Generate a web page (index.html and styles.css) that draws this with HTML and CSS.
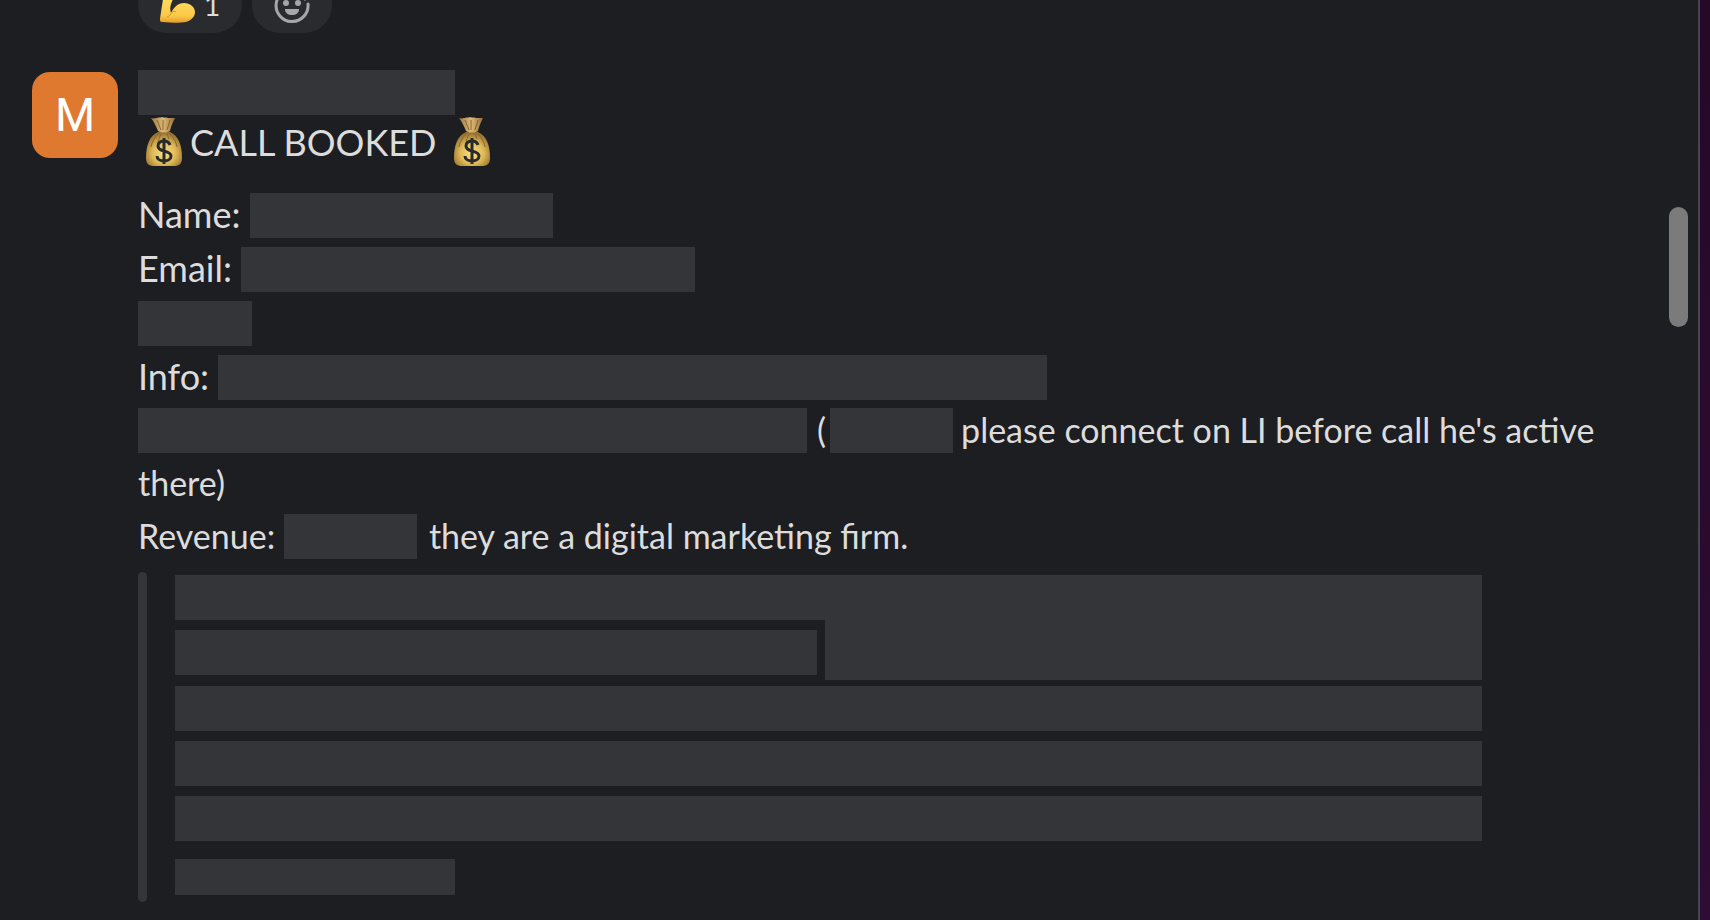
FILE: index.html
```
<!DOCTYPE html>
<html lang="en">
<head>
  <meta charset="UTF-8">
  <meta name="viewport" content="width=device-width, initial-scale=1.0">
  <title>Call Booked</title>
  <link rel="stylesheet" href="styles.css">
</head>
<body>
  <svg class="defs" width="0" height="0" aria-hidden="true">
    <defs>
      <radialGradient id="bag" cx="50%" cy="62%" r="60%">
        <stop offset="0" stop-color="#f9e088"/>
        <stop offset="0.55" stop-color="#dfb955"/>
        <stop offset="1" stop-color="#94702f"/>
      </radialGradient>
      <linearGradient id="neck" x1="0" x2="1">
        <stop offset="0" stop-color="#a07a44"/>
        <stop offset="0.5" stop-color="#dcb878"/>
        <stop offset="1" stop-color="#94703c"/>
      </linearGradient>
      <linearGradient id="arm" x1="0" y1="0" x2="0" y2="1">
        <stop offset="0.3" stop-color="#ffdc5e"/>
        <stop offset="0.8" stop-color="#fbc845"/>
        <stop offset="1" stop-color="#e39c2c"/>
      </linearGradient>
      <symbol id="money-bag" viewBox="0 0 36 50">
        <path d="M12 15C3 19 0 29 0 41c0 6 3 8 8 8h20c5 0 8-2 8-8 0-12-3-22-12-26z" fill="url(#bag)"/>
        <path d="M5 1c2 1 4 0 6 0 2-1 3 0 5-1 2 1 4 0 6 1 2 0 4 0 7 0-2 4-4 8-5 13-3 2-9 2-12 0C10 9 8 5 5 1z" fill="url(#neck)"/>
        <path d="M11 3l4 10M17 3v10M24 3l-3 10M12 17c-4 4-6 8-7 13M24 17c4 4 6 8 7 13M15 17l-3 7M21 17l2 5" fill="none" stroke="#8a6630" stroke-width="1"/>
        <path d="M24 28c-1-3-3-4-6-4-4 0-6 2-6 5s2 4 6 5c4 1 7 2 7 5s-3 5-7 5-7-2-7-5M18 21v26" fill="none" stroke="#292a2b" stroke-width="3"/>
      </symbol>
    </defs>
  </svg>

  <div class="app">
    <main class="pane">
      <div class="reactions">
        <button class="reaction" aria-label="Flexed biceps, 1 reaction">
          <svg class="arm" viewBox="0 0 36 36" aria-hidden="true">
            <path d="M4 4C3 14 1 24 0 32c0 3 1 3 3 3 8 1 17 1 23 0 6-2 9-6 9-10 0-5-5-9-11-9-6 0-10 4-13 10-1-3-1-6 0-9l2-5V2z" fill="url(#arm)"/>
            <path d="M7 30c3-1 4-3 5-5 1-1 3-1 4 0" fill="none" stroke="#d8962a" stroke-width="1"/>
          </svg>
          <span class="count">1</span>
        </button>
        <button class="reaction" aria-label="Add reaction">
          <svg class="smile" viewBox="0 0 36 36" aria-hidden="true">
            <path d="M22 3A16 16 0 1 0 34 17" fill="none" stroke="#a7a7a9" stroke-width="3" stroke-linecap="round"/>
            <path d="M31 4v9M27 8h9" fill="none" stroke="#77777a" stroke-width="2" stroke-linecap="round"/>
            <ellipse cx="12" cy="16" rx="3" ry="3" fill="#a7a7a9"/>
            <ellipse cx="24" cy="16" rx="3" ry="3" fill="#a7a7a9"/>
            <path d="M11 22h14c0 4-3 6-7 6s-7-2-7-6z" fill="#a7a7a9"/>
          </svg>
        </button>
      </div>

      <article class="message">
        <div class="avatar">M</div>
        <div class="body">
          <div class="redacted sender"></div>
          <h1 class="title">
            <svg class="bag" aria-hidden="true"><use href="#money-bag"/></svg>
            <span>CALL BOOKED</span>
            <svg class="bag" aria-hidden="true"><use href="#money-bag"/></svg>
          </h1>

          <div class="contact">
            <div class="line">Name: <span class="redacted name"></span></div>
            <div class="line">Email: <span class="redacted email"></span></div>
            <div class="line"><span class="redacted phone"></span></div>
            <div class="line">Info: <span class="redacted info"></span></div>
          </div>
          <div class="details">
            <div class="line"><span class="redacted info-more"></span><span class="paren">(</span><span class="redacted person"></span>please connect on LI before call he's active</div>
            <div class="line">there)</div>
            <div class="line">Revenue: <span class="redacted revenue"></span>they are a digital marketing firm.</div>
          </div>

          <blockquote class="quote">
            <div class="quote-top">
              <div class="redacted quote-first"></div>
              <div class="redacted quote-second"></div>
              <div class="redacted quote-side"></div>
            </div>
            <div class="redacted"></div>
            <div class="redacted"></div>
            <div class="redacted"></div>
            <div class="redacted quote-last"></div>
          </blockquote>
        </div>
      </article>
      <div class="scrollbar"></div>
    </main>
    <div class="edge"></div>
  </div>
</body>
</html>
```
FILE: styles.css
```
* {
  box-sizing: border-box;
}

body {
  margin: 0;
  background-color: #1d1e22;
  color: #dcdcdc;
  font-family: Lato, sans-serif;
  font-size: 36px;
}

.defs {
  position: absolute;
}

.app {
  display: flex;
  min-height: 100vh;
}

.pane {
  position: relative;
  flex: 1;
  min-width: 0;
  overflow: hidden;
  border-right: 2px solid #48434e;
}

.edge {
  width: 10px;
  background: linear-gradient(#270829, #2e0c33);
}

/* reactions of the message above, scrolled partly out of view */
.reactions {
  display: flex;
  gap: 10px;
  height: 33px;
  margin-left: 138px;
  align-items: flex-end;
}

.reaction {
  display: flex;
  align-items: center;
  justify-content: center;
  gap: 8px;
  flex: none;
  height: 56px;
  padding: 0 22px;
  border: 0;
  border-radius: 28px;
  background-color: #2a2b2f;
  color: #dcdcdc;
  font: 28px Lato, sans-serif;
}

.arm,
.smile {
  width: 36px;
  height: 36px;
}

.message {
  display: flex;
  gap: 20px;
  padding: 37px 32px 16px;
}

.avatar {
  display: flex;
  align-items: center;
  justify-content: center;
  flex: none;
  width: 86px;
  height: 86px;
  margin-top: 2px;
  border-radius: 18px;
  background-color: #df7930;
  color: #fff;
  font-family: Roboto, sans-serif;
  font-size: 46px;
}

.body {
  flex: 1;
  min-width: 0;
}

.redacted {
  height: 45px;
  flex: none;
  background-color: #343538;
}

.sender {
  width: 317px;
}

.title {
  display: flex;
  align-items: center;
  gap: 8px;
  height: 54px;
  margin: 0 0 18px;
  padding-left: 8px;
  font-size: 36px;
  font-weight: 400;
}

.title span {
  margin-right: 10px;
}

.bag {
  width: 36px;
  height: 50px;
}

.line {
  display: flex;
  align-items: center;
  height: 54px;
  white-space: pre;
}

.line .redacted {
  margin-top: 2px;
}

.details .line {
  height: 53px;
  font-size: 34px;
}

.name {
  width: 303px;
}

.email {
  width: 454px;
}

.phone {
  width: 114px;
}

.info {
  width: 829px;
}

.info-more {
  width: 669px;
}

.paren {
  padding: 0 4px 0 10px;
}

.person {
  width: 123px;
  margin-right: 8px;
}

.revenue {
  width: 133px;
  margin-right: 12px;
}

.quote {
  position: relative;
  display: flex;
  flex-direction: column;
  gap: 10px;
  margin: 10px 0 0;
  padding: 3px 184px 7px 37px;
}

.quote::before {
  content: "";
  position: absolute;
  top: 0;
  bottom: 0;
  left: 0;
  width: 9px;
  border-radius: 5px;
  background-color: #343538;
}

.quote-top {
  display: grid;
  grid-template-columns: 642px 8px 1fr;
  grid-template-rows: 45px 10px 45px 5px;
  margin-bottom: -4px;
}

.quote-first {
  grid-area: 1 / 1 / 2 / 4;
}

.quote-second {
  grid-area: 3 / 1 / 4 / 2;
}

.quote-side {
  grid-area: 1 / 3 / 5 / 4;
  height: auto;
}

.quote-last {
  width: 280px;
  height: 36px;
  margin-top: 8px;
}

.scrollbar {
  position: absolute;
  top: 207px;
  right: 10px;
  width: 19px;
  height: 120px;
  border-radius: 10px;
  background-color: #7b7b7c;
}
```
